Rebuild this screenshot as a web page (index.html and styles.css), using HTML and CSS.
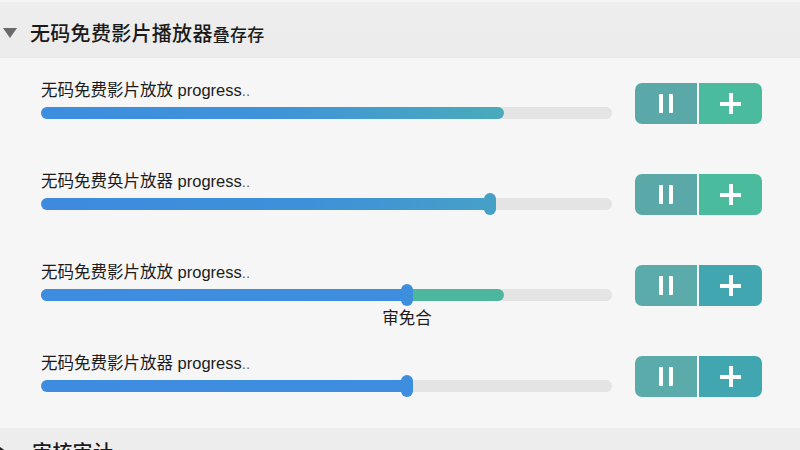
FILE: index.html
```html
<!DOCTYPE html>
<html lang="zh">
<head>
<meta charset="utf-8">
<title>无码免费影片播放器</title>
<link rel="stylesheet" href="styles.css">
</head>
<body>
<div class="page">
  <header class="section-head">
    <span class="tri tri-down"></span>
    <h1 class="title">无码免费影片播放器<span class="title-sub">叠存存</span></h1>
  </header>

  <main class="list">
    <div class="row">
      <div class="info">
        <div class="label">无码免费影片放放 progress<span class="dots">..</span></div>
        <div class="track">
          <div class="fill fill-a" style="width:463px"></div>
        </div>
      </div>
      <div class="btns btns-green">
        <button class="btn btn-l"><span class="pause"></span></button>
        <button class="btn btn-r"><span class="plus"></span></button>
      </div>
    </div>

    <div class="row">
      <div class="info">
        <div class="label">无码免费奂片放器 progress<span class="dots">..</span></div>
        <div class="track">
          <div class="fill fill-b" style="width:449px"></div>
          <span class="thumb thumb-b" style="left:443px"></span>
        </div>
      </div>
      <div class="btns btns-green">
        <button class="btn btn-l"><span class="pause"></span></button>
        <button class="btn btn-r"><span class="plus"></span></button>
      </div>
    </div>

    <div class="row">
      <div class="info">
        <div class="label">无码免费影片放放 progress<span class="dots">..</span></div>
        <div class="track">
          <div class="fill fill-teal" style="width:463px"></div>
          <div class="fill fill-c" style="width:366px"></div>
          <span class="thumb" style="left:360px"></span>
          <span class="thumb-cap" style="left:360px">审免合</span>
        </div>
      </div>
      <div class="btns btns-blue">
        <button class="btn btn-l"><span class="pause"></span></button>
        <button class="btn btn-r"><span class="plus"></span></button>
      </div>
    </div>

    <div class="row">
      <div class="info">
        <div class="label">无码免费影片放器 progress<span class="dots">..</span></div>
        <div class="track">
          <div class="fill fill-c" style="width:366px"></div>
          <span class="thumb" style="left:360px"></span>
        </div>
      </div>
      <div class="btns btns-blue">
        <button class="btn btn-l"><span class="pause"></span></button>
        <button class="btn btn-r"><span class="plus"></span></button>
      </div>
    </div>
  </main>

  <footer class="section-head section-foot">
    <span class="tri tri-right"></span>
    <h2 class="title">审核审计</h2>
  </footer>
</div>
</body>
</html>
```

FILE: styles.css
```css
* { box-sizing: border-box; }
html, body {
  margin: 0;
  padding: 0;
  width: 800px;
  height: 450px;
  overflow: hidden;
  background: #f6f6f6;
  font-family: "Liberation Sans", "Noto Sans CJK SC", sans-serif;
  color: #1e1e1e;
}
.page {
  display: flex;
  flex-direction: column;
  width: 800px;
  height: 450px;
  overflow: hidden;
}
.section-head {
  flex: 0 0 58px;
  display: flex;
  align-items: center;
  padding: 6px 0 0 3px;
  background: linear-gradient(#eeeeee, #ebebeb);
  border-top: 2px solid #f6f6f6;
}
.tri {
  width: 0;
  height: 0;
  display: block;
}
.tri-down {
  border-left: 7px solid transparent;
  border-right: 7px solid transparent;
  border-top: 10px solid #6a6a6a;
}
.tri-right {
  border-top: 7px solid transparent;
  border-bottom: 7px solid transparent;
  border-left: 10px solid #222;
}
.title {
  margin: 0 0 0 13px;
  font-family: "Noto Sans CJK SC", sans-serif;
  font-size: 20px;
  font-weight: 500;
  line-height: 26px;
  color: #1a1a1a;
  letter-spacing: 0.3px;
}
.title-sub {
  font-size: 17px;
}
.list {
  flex: 0 0 370px;
  height: 370px;
  padding: 20px 0 0 41px;
  display: flex;
  flex-direction: column;
  background: #f6f6f6;
}
.row {
  flex: 0 0 91px;
  display: flex;
  align-items: flex-start;
  gap: 23px;
}
.row:last-child { flex-basis: 77px; }
.info {
  width: 571px;
  display: flex;
  flex-direction: column;
}
.label {
  font-size: 16.5px;
  line-height: 22px;
  color: #1c1c1c;
  white-space: nowrap;
  padding-top: 1px;
  height: 22px;
}
.dots { color: #666; font-size: 15px; }
.track {
  position: relative;
  margin-top: 7px;
  height: 12px;
  border-radius: 6px;
  background: #e4e4e4;
}
.fill {
  position: absolute;
  left: 0;
  top: 0;
  height: 12px;
  border-radius: 6px;
}
.fill-a { background: linear-gradient(90deg, #3d8de0 0%, #3f93d8 50%, #4aabbb 100%); }
.fill-b { background: linear-gradient(90deg, #3d8ae0 0%, #3e91d8 60%, #45a0c8 100%); }
.fill-c { background: linear-gradient(90deg, #3d8ce0 0%, #3e8edf 100%); }
.fill-teal { background: #4cb79d; }
.thumb {
  position: absolute;
  top: -5px;
  width: 12px;
  height: 22px;
  border-radius: 6px;
  background: #3e8ede;
}
.thumb-b { background: #44a0c7; }
.thumb-cap {
  position: absolute;
  top: 17px;
  transform: translateX(-50%);
  margin-left: 6px;
  font-family: "Noto Sans CJK SC", sans-serif;
  font-size: 16.5px;
  line-height: 22px;
  color: #1c1c1c;
  white-space: nowrap;
}
.btns {
  margin-top: 5px;
  width: 127px;
  height: 41px;
  display: flex;
  gap: 2px;
  border-radius: 7px;
  overflow: hidden;
  background: #f6f6f6;
}
.btn {
  border: 0;
  padding: 0;
  height: 41px;
  display: flex;
  align-items: center;
  justify-content: center;
}
.btn-l { width: 62px; }
.btn-r { flex: 1; }
.btns-green .btn-l { background: #5ba8a8; }
.btns-green .btn-r { background: #4bbb9d; }
.btns-blue .btn-l { background: #5aabaa; }
.btns-blue .btn-r { background: #41a6af; }
.pause {
  display: block;
  width: 14px;
  height: 19px;
  border-left: 4px solid #fff;
  border-right: 4px solid #fff;
  border-radius: 1px;
}
.plus {
  position: relative;
  display: block;
  width: 21px;
  height: 21px;
}
.plus::before, .plus::after {
  content: "";
  position: absolute;
  background: #fff;
}
.plus::before { left: 0; top: 8.5px; width: 21px; height: 4px; }
.plus::after { top: 0; left: 8.5px; width: 4px; height: 21px; }
.section-foot {
  flex: 0 0 58px;
  align-items: flex-start;
  padding: 11px 0 0 0;
  border-top: 0;
}
.section-foot .tri { margin-top: 8px; }
.section-foot .title { margin-left: 22px; }
```
